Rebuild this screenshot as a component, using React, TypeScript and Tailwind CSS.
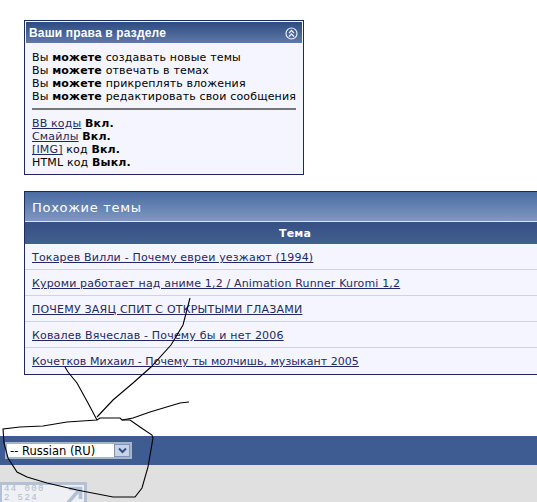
const rows = [
  { t: "Токарев Вилли - Почему евреи уезжают (1994)", c: "tracking-[0.19px]" },
  { t: "Куроми работает над аниме 1,2 / Animation Runner Kuromi 1,2", c: "tracking-[0.16px]" },
  { t: "ПОЧЕМУ ЗАЯЦ СПИТ С ОТКРЫТЫМИ ГЛАЗАМИ", c: "tracking-[0.21px]" },
  { t: "Ковалев Вячеслав - Почему бы и нет 2006", c: "tracking-[0.19px]" },
  { t: "Кочетков Михаил - Почему ты молчишь, музыкант 2005", c: "tracking-[0.04px]" },
];
const perms = ["создавать новые темы", "отвечать в темах", "прикреплять вложения", "редактировать свои сообщения"];

export default function App() {
  return (
    <div className="relative h-[502px] w-[537px] overflow-hidden bg-white text-[11px] leading-[13px] tracking-[0.16px] text-black [font-family:'DejaVu_Sans',Verdana,sans-serif]">
      <div className="pl-6 pt-5">
        <div className="h-[155px] w-[280px] border border-[#1d2a5c] bg-[#f5f5ff] p-px">
          <div className="flex h-[21px] items-center justify-between bg-gradient-to-b from-[#2e4a80] to-[#5f7aa9] pl-[3px] pr-[4px] pt-px font-bold text-white [font-family:'Liberation_Sans',Arial,sans-serif]">
            <span className="text-[12px]">Ваши права в разделе</span>
            <svg width="13" height="13" viewBox="0 0 13 13" fill="none">
              <circle cx="6.5" cy="6.5" r="5.5" stroke="#e8eef8" strokeWidth="1.2" />
              <path d="M4 6 6.5 3.5 9 6M4 9.5 6.5 7 9 9.5" stroke="#e8eef8" strokeWidth="1.3" />
            </svg>
          </div>
          <div className="px-[6px] pt-2">
            {perms.map((p) => (
              <div key={p} className="whitespace-nowrap">
                Вы <b>можете</b> {p}
              </div>
            ))}
            <div className="mb-[7px] mt-[5px] h-0.5 bg-[#777]" />
            <div><a className="text-[#1f2a60] underline">BB коды</a> <b>Вкл.</b></div>
            <div><a className="text-[#1f2a60] underline">Смайлы</a> <b>Вкл.</b></div>
            <div><a className="text-[#1f2a60] underline">[IMG]</a> код <b>Вкл.</b></div>
            <div>HTML код <b>Выкл.</b></div>
          </div>
        </div>

        <div className="mt-4 h-[184px] w-[542px] border border-[#1d2a5c] bg-[#f5f5ff]">
          <div className="flex h-[29px] items-center bg-gradient-to-b from-[#4a6ca3] to-[#7e98c0] pl-[7px] pt-0.5 text-[13px] tracking-[0.7px] text-white">
            Похожие темы
          </div>
          <div className="flex h-[23px] items-center justify-center border-t border-[#dfe6f2] bg-gradient-to-b from-[#364f84] to-[#42608f] text-[11px] font-bold text-white">
            Тема
          </div>
          {rows.map((r, i) => (
            <div
              key={r.t}
              className={`flex h-[26px] items-center whitespace-nowrap pl-[7px] ${i < rows.length - 1 ? "border-b border-[#ced4e4] pt-0.5" : "pt-px"} ${r.c}`}
            >
              <a className="text-[#1f2a60] underline">{r.t}</a>
            </div>
          ))}
        </div>
      </div>

      <div className="mt-[61px] flex h-[29px] items-start bg-[#3e5c92] pl-[5px] pt-[6px]">
        <div className="flex h-[17px] w-[127px] items-center border-2 border-[#a6b4cc] bg-white">
          <span className="flex-1 pl-[3px] pt-px text-[11.5px] tracking-normal">-- Russian (RU)</span>
          <span className="flex h-[13px] w-[16px] items-center justify-center border border-[#7f93b5] bg-[#c6d4ea]">
            <svg width="9" height="7" viewBox="0 0 9 7" fill="none">
              <path d="M1 1.5 4.5 5 8 1.5" stroke="#33507f" strokeWidth="2" />
            </svg>
          </span>
        </div>
      </div>

      <div className="h-[37px] bg-[#e0e0e0] pt-[17px]">
        <div className="relative h-[21px] w-[87px] overflow-hidden border-l-2 border-r-[3px] border-t-[3px] border-[#b4c0d4] bg-[#eef0f4] pl-0.5 text-[9px] leading-[9px] tracking-[1.4px] text-[#aebbcf] [font-family:'Liberation_Mono',monospace]">
          <div>44 000</div>
          <div>2 524</div>
          <svg className="absolute right-0 top-0" width="20" height="18" viewBox="0 0 20 18" fill="none">
            <path d="M2 20 16 4M5 3.5h11.5V14" stroke="#b4c0d4" strokeWidth="3.5" />
          </svg>
        </div>
      </div>

      <svg className="pointer-events-none absolute inset-0" width="537" height="502" fill="none" stroke="#000" strokeWidth="1.1">
        <path d="M190 298 183 325 171 345 151 367 133 383 113 400 97 417" />
        <path d="M65 367 68 372 77 383 88 403 97 420" />
        <path d="M97 420 67 422 43 426 20 427 3 429 4 443 8 458 17 472 27 477 47 483 77 490 113 497 135 497 142 488 148 467 153 438 152 435 140 427 130 420 122 420 120 418 100 418 97 420" />
        <path d="M122 420 133 418 150 412 180 403 189 402" />
      </svg>
    </div>
  );
}
